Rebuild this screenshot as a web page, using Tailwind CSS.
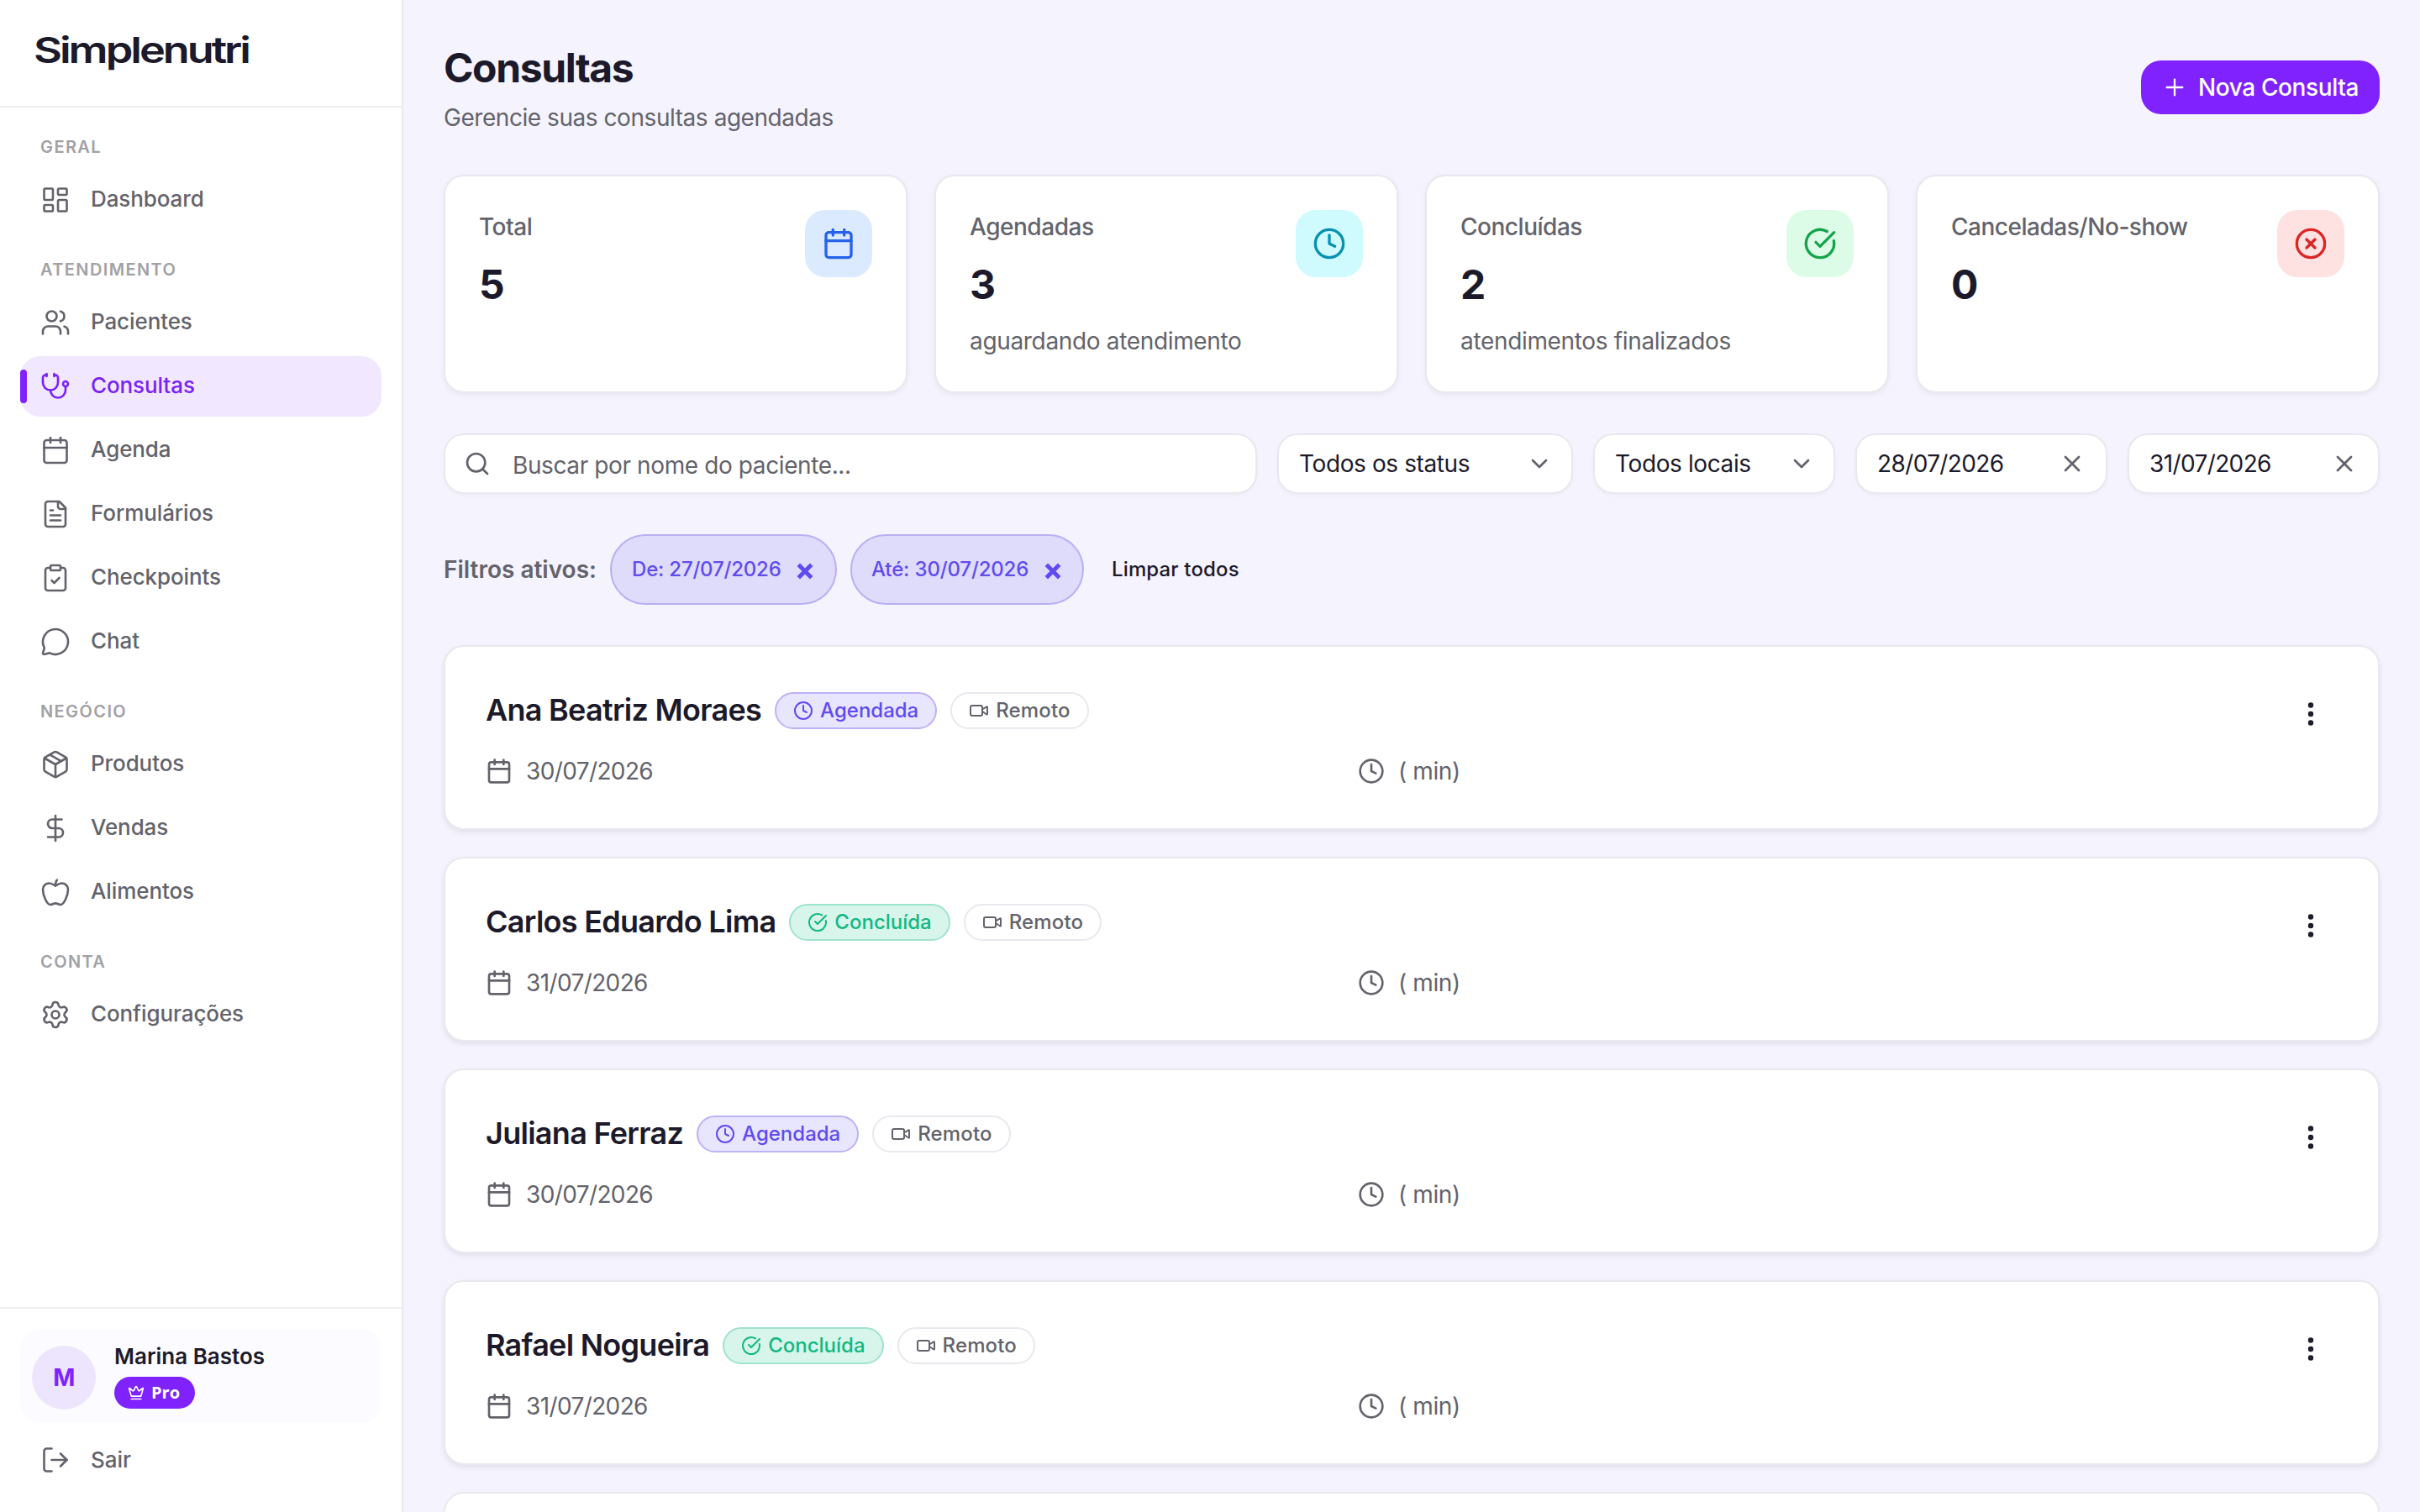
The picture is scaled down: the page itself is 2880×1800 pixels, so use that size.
<!DOCTYPE html>
<html lang="pt-BR">
<head>
    <meta charset="UTF-8">
    <meta name="viewport" content="width=device-width, initial-scale=1.0">
    <title>Consultas - Simplenutri</title>
    <script src="https://cdn.jsdelivr.net/npm/@tailwindcss/browser@4"></script>
</head>
<body class="h-[1800px] w-[2880px] overflow-hidden bg-[#f5f3fe] font-['Inter',sans-serif] text-[28px] leading-10 tracking-[-0.014em] text-[#1c1a2a]">

    <!-- icons -->
    <svg class="hidden" xmlns="http://www.w3.org/2000/svg">
        <symbol id="dashboard" viewBox="0 0 24 24"><rect width="7" height="9" x="3" y="3" rx="1"/><rect width="7" height="5" x="14" y="3" rx="1"/><rect width="7" height="9" x="14" y="12" rx="1"/><rect width="7" height="5" x="3" y="16" rx="1"/></symbol>
        <symbol id="users" viewBox="0 0 24 24"><path d="M16 21v-2a4 4 0 0 0-4-4H6a4 4 0 0 0-4 4v2"/><path d="M16 3.128a4 4 0 0 1 0 7.744"/><path d="M22 21v-2a4 4 0 0 0-3-3.87"/><circle cx="9" cy="7" r="4"/></symbol>
        <symbol id="stethoscope" viewBox="0 0 24 24"><path d="M11 2v2"/><path d="M5 2v2"/><path d="M5 3H4a2 2 0 0 0-2 2v4a6 6 0 0 0 12 0V5a2 2 0 0 0-2-2h-1"/><path d="M8 15a6 6 0 0 0 12 0v-3"/><circle cx="20" cy="10" r="2"/></symbol>
        <symbol id="calendar" viewBox="0 0 24 24"><path d="M8 2v4"/><path d="M16 2v4"/><rect width="18" height="18" x="3" y="4" rx="2"/><path d="M3 10h18"/></symbol>
        <symbol id="file" viewBox="0 0 24 24"><path d="M15 2H6a2 2 0 0 0-2 2v16a2 2 0 0 0 2 2h12a2 2 0 0 0 2-2V7Z"/><path d="M14 2v4a2 2 0 0 0 2 2h4"/><path d="M10 9H8"/><path d="M16 13H8"/><path d="M16 17H8"/></symbol>
        <symbol id="clipboard" viewBox="0 0 24 24"><rect width="8" height="4" x="8" y="2" rx="1"/><path d="M16 4h2a2 2 0 0 1 2 2v14a2 2 0 0 1-2 2H6a2 2 0 0 1-2-2V6a2 2 0 0 1 2-2h2"/><path d="m9 14 2 2 4-4"/></symbol>
        <symbol id="chat" viewBox="0 0 24 24"><path d="M2.992 16.342a2 2 0 0 1 .094 1.167l-1.065 3.29a1 1 0 0 0 1.236 1.168l3.413-.998a2 2 0 0 1 1.099.092 10 10 0 1 0-4.777-4.719"/></symbol>
        <symbol id="package" viewBox="0 0 24 24"><path d="M11 21.73a2 2 0 0 0 2 0l7-4A2 2 0 0 0 21 16V8a2 2 0 0 0-1-1.73l-7-4a2 2 0 0 0-2 0l-7 4A2 2 0 0 0 3 8v8a2 2 0 0 0 1 1.73z"/><path d="M12 22V12"/><path d="M3.29 7 12 12l8.71-5"/><path d="m7.5 4.27 9 5.15"/></symbol>
        <symbol id="dollar" viewBox="0 0 24 24"><path d="M12 2v20"/><path d="M17 5H9.5a3.5 3.5 0 0 0 0 7h5a3.5 3.5 0 0 1 0 7H6"/></symbol>
        <symbol id="apple" viewBox="0 0 24 24"><path d="M12 20.94c1.5 0 2.75 1.06 4 1.06 3 0 6-8 6-12.22A4.91 4.91 0 0 0 17 5c-2.22 0-4 1.44-5 2-1-.56-2.78-2-5-2a4.9 4.9 0 0 0-5 4.78C2 14 5 22 8 22c1.25 0 2.5-1.06 4-1.06Z"/><path d="M12 7c0-2 .3-3.6 1.2-4.6"/></symbol>
        <symbol id="settings" viewBox="0 0 24 24"><path d="M9.671 4.136a2.34 2.34 0 0 1 4.659 0 2.34 2.34 0 0 0 3.319 1.915 2.34 2.34 0 0 1 2.33 4.033 2.34 2.34 0 0 0 0 3.831 2.34 2.34 0 0 1-2.33 4.033 2.34 2.34 0 0 0-3.319 1.915 2.34 2.34 0 0 1-4.659 0 2.34 2.34 0 0 0-3.32-1.915 2.34 2.34 0 0 1-2.33-4.033 2.34 2.34 0 0 0 0-3.831A2.34 2.34 0 0 1 6.35 6.051a2.34 2.34 0 0 0 3.319-1.915"/><circle cx="12" cy="12" r="3"/></symbol>
        <symbol id="logout" viewBox="0 0 24 24"><path d="m16 17 5-5-5-5"/><path d="M21 12H9"/><path d="M9 21H5a2 2 0 0 1-2-2V5a2 2 0 0 1 2-2h4"/></symbol>
        <symbol id="crown" viewBox="0 0 24 24"><path d="M11.562 3.266a.5.5 0 0 1 .876 0L15.39 8.87a1 1 0 0 0 1.516.294L21.183 5.5a.5.5 0 0 1 .798.519l-2.834 10.246a1 1 0 0 1-.956.734H5.81a1 1 0 0 1-.957-.734L2.02 6.02a.5.5 0 0 1 .798-.519l4.276 3.664a1 1 0 0 0 1.516-.294z"/><path d="M5 21h14"/></symbol>
        <symbol id="plus" viewBox="0 0 24 24"><path d="M5 12h14"/><path d="M12 5v14"/></symbol>
        <symbol id="clock" viewBox="0 0 24 24"><circle cx="12" cy="12" r="10"/><path d="M12 6v6l4 2"/></symbol>
        <symbol id="check" viewBox="0 0 24 24"><path d="M21.801 10A10 10 0 1 1 17 3.335"/><path d="m9 11 3 3L22 4"/></symbol>
        <symbol id="cancel" viewBox="0 0 24 24"><circle cx="12" cy="12" r="10"/><path d="m15 9-6 6"/><path d="m9 9 6 6"/></symbol>
        <symbol id="search" viewBox="0 0 24 24"><path d="m21 21-4.34-4.34"/><circle cx="11" cy="11" r="8"/></symbol>
        <symbol id="chevron" viewBox="0 0 24 24"><path d="m6 9 6 6 6-6"/></symbol>
        <symbol id="x" viewBox="0 0 24 24"><path d="M18 6 6 18"/><path d="m6 6 12 12"/></symbol>
        <symbol id="video" viewBox="0 0 24 24"><path d="m16 13 5.223 3.482a.5.5 0 0 0 .777-.416V7.87a.5.5 0 0 0-.752-.432L16 10.5"/><rect x="2" y="6" width="14" height="12" rx="2"/></symbol>
        <symbol id="dots" viewBox="0 0 24 24"><circle cx="12" cy="12" r="1"/><circle cx="12" cy="5" r="1"/><circle cx="12" cy="19" r="1"/></symbol>
    </svg>

    <div class="flex h-full">
        <aside class="flex w-[480px] shrink-0 flex-col border-r-2 border-[#e9e8ee] bg-white">
            <div class="h-32 border-b-2 border-[#efeff1] pt-7 pl-10">
                <svg class="h-16 w-[262px] fill-[#1c1a2a]" viewBox="0 0 262 64"><text x="0" y="47" textLength="256" lengthAdjust="spacingAndGlyphs" class="text-[43px] font-semibold tracking-[-2.5px]">Simplenutri</text></svg>
            </div>
            <nav id="nav" class="flex-1 space-y-8 px-6 pt-8"></nav>
            <div class="border-t-2 border-[#efeff1] px-6 pt-6 pb-[26px]">
                <div class="flex h-28 items-center rounded-3xl bg-[#fcfbff] pl-3.5">
                    <div class="mt-1 flex size-[76px] items-center justify-center rounded-full bg-[#ede5fd] text-[28px] font-bold text-[#7f22fe]">M</div>
                    <div class="ml-[22px] pb-0.5">
                        <div class="text-[26px] leading-9 font-semibold tracking-normal">Marina Bastos</div>
                        <div class="mt-1.5 inline-flex h-[38px] w-24 items-center gap-2 rounded-full bg-[#7f22fe] pl-4 align-top font-['Open_Sans',sans-serif] text-xl font-bold tracking-normal text-white">
                            <svg class="size-5 shrink-0 fill-none stroke-current stroke-2" stroke-linecap="round" stroke-linejoin="round"><use href="#crown"/></svg>
                            Pro
                        </div>
                    </div>
                </div>
                <a class="mt-2 flex h-[72px] items-center gap-6 pl-6 text-[26px] font-medium tracking-normal text-[#63636b]">
                    <svg class="size-9 fill-none stroke-current stroke-[1.75]" stroke-linecap="round" stroke-linejoin="round"><use href="#logout"/></svg>
                    Sair
                </a>
            </div>
        </aside>

        <main class="flex-1 px-12 pt-12">
            <header class="mb-12 flex items-center justify-between">
                <div>
                    <h1 class="pt-px text-5xl leading-16 font-bold tracking-[-0.029em]">Consultas</h1>
                    <p class="mt-[7px] tracking-[-0.016em] text-[#63636b]">Gerencie suas consultas agendadas</p>
                </div>
                <button class="flex h-16 w-[284px] items-center gap-3 rounded-3xl bg-[#7f22fe] pl-6 font-medium whitespace-nowrap text-white">
                    <svg class="size-8 fill-none stroke-current stroke-[1.75]" stroke-linecap="round" stroke-linejoin="round"><use href="#plus"/></svg>
                    Nova Consulta
                </button>
            </header>

            <section id="stats" class="mb-12 grid grid-cols-4 gap-8"></section>

            <section class="mb-12 flex gap-6">
                <div class="flex h-[72px] flex-1 items-center gap-[26px] rounded-3xl border-2 border-[#e9e8ee] bg-white pl-[22px] text-[#63636b] shadow-[0_2px_4px_rgba(0,0,0,0.03)]">
                    <svg class="size-8 fill-none stroke-current stroke-2" stroke-linecap="round" stroke-linejoin="round"><use href="#search"/></svg>
                    <span class="pt-1">Buscar por nome do paciente...</span>
                </div>
                <div class="flex h-[72px] w-[352px] items-center justify-between rounded-3xl border-2 border-[#e9e8ee] bg-white pr-[22px] pl-6 shadow-[0_2px_4px_rgba(0,0,0,0.03)]">
                    Todos os status
                    <svg class="size-8 fill-none stroke-[#63636b] stroke-2" stroke-linecap="round" stroke-linejoin="round"><use href="#chevron"/></svg>
                </div>
                <div class="flex h-[72px] w-[288px] items-center justify-between rounded-3xl border-2 border-[#e9e8ee] bg-white pr-[22px] pl-6 shadow-[0_2px_4px_rgba(0,0,0,0.03)]">
                    Todos locais
                    <svg class="size-8 fill-none stroke-[#63636b] stroke-2" stroke-linecap="round" stroke-linejoin="round"><use href="#chevron"/></svg>
                </div>
                <div class="flex h-[72px] w-[300px] items-center justify-between rounded-3xl border-2 border-[#e9e8ee] bg-white px-6 tracking-[-0.022em] shadow-[0_2px_4px_rgba(0,0,0,0.03)]">
                    28/07/2026
                    <svg class="size-8 fill-none stroke-[#63636b] stroke-2" stroke-linecap="round" stroke-linejoin="round"><use href="#x"/></svg>
                </div>
                <div class="flex h-[72px] w-[300px] items-center justify-between rounded-3xl border-2 border-[#e9e8ee] bg-white px-6 tracking-[-0.022em] shadow-[0_2px_4px_rgba(0,0,0,0.03)]">
                    31/07/2026
                    <svg class="size-8 fill-none stroke-[#63636b] stroke-2" stroke-linecap="round" stroke-linejoin="round"><use href="#x"/></svg>
                </div>
            </section>

            <section class="mb-12 flex h-[84px] items-center whitespace-nowrap">
                <span class="w-[198px] font-semibold tracking-normal text-[#63636b]">Filtros ativos:</span>
                <span class="flex h-[84px] w-[270px] items-center justify-between rounded-full border-2 border-[#b9b0f5] bg-[#dedbfb] pr-[25px] pl-6 text-2xl font-medium tracking-[-0.008em] text-[#5f4bf0]">
                    De: 27/07/2026
                    <svg class="mt-1 size-[22px] fill-none stroke-current stroke-[4.5]" viewBox="0 0 20 20"><path d="M3 3l14 14M17 3 3 17"/></svg>
                </span>
                <span class="ml-4 flex h-[84px] w-[278px] items-center justify-between rounded-full border-2 border-[#b9b0f5] bg-[#dedbfb] pr-6 pl-[23px] text-2xl font-medium tracking-[-0.006em] text-[#5f4bf0]">
                    Até: 30/07/2026
                    <svg class="mt-1 size-[22px] fill-none stroke-current stroke-[4.5]" viewBox="0 0 20 20"><path d="M3 3l14 14M17 3 3 17"/></svg>
                </span>
                <span class="ml-[33px] text-2xl font-medium tracking-[0.006em]">Limpar todos</span>
            </section>

            <section id="list" class="space-y-8"></section>
        </main>
    </div>

    <script>
        const icon = (name, cls) => `<svg class="shrink-0 fill-none stroke-current ${cls}" stroke-linecap="round" stroke-linejoin="round"><use href="#${name}"/></svg>`;

        const groups = [
            ["GERAL", [["dashboard", "Dashboard"]]],
            ["ATENDIMENTO", [["users", "Pacientes"], ["stethoscope", "Consultas"], ["calendar", "Agenda"], ["file", "Formulários"], ["clipboard", "Checkpoints"], ["chat", "Chat"]]],
            ["NEGÓCIO", [["package", "Produtos"], ["dollar", "Vendas"], ["apple", "Alimentos"]]],
            ["CONTA", [["settings", "Configurações"]]]
        ];
        document.getElementById("nav").innerHTML = groups.map(([title, items]) => `
            <div>
                <div class="mb-3 pl-6 text-xl leading-[30px] font-semibold tracking-[0.07em] text-[#a1a1a6]">${title}</div>
                <div class="space-y-1">
                    ${items.map(([name, label]) => `
                        <a class="relative flex h-[72px] items-center gap-6 rounded-3xl pl-6 text-[26px] font-medium tracking-[-0.004em] ${label === "Consultas" ? "bg-[#f1e7ff] text-[#7a22f5]" : "text-[#63636b]"}">
                            ${label === "Consultas" ? `<span class="absolute top-4 left-0 h-10 w-2 rounded bg-[#7f22fe]"></span>` : ""}
                            ${icon(name, "size-9 stroke-[1.75]")}
                            <span class="-mt-0.5">${label}</span>
                        </a>
                    `).join("")}
                </div>
            </div>
        `).join("");

        const stats = [
            ["Total", 5, "", "calendar", "bg-[#dbeafe] text-[#2563eb]"],
            ["Agendadas", 3, "aguardando atendimento", "clock", "bg-[#cffafe] text-[#0891b2]"],
            ["Concluídas", 2, "atendimentos finalizados", "check", "bg-[#dcfce7] text-[#16a34a]"],
            ["Canceladas/No-show", 0, "", "cancel", "bg-[#fee2e2] text-[#dc2626]"]
        ];
        document.getElementById("stats").innerHTML = stats.map(([label, value, note, name, color]) => `
            <div class="flex h-[260px] justify-between rounded-3xl border-2 border-[#e9e8ee] bg-white p-10 shadow-[0_2px_6px_rgba(0,0,0,0.06)]">
                <div class="text-[#63636b]">
                    <div class="font-medium tracking-[-0.017em]">${label}</div>
                    <div class="mt-[17px] mb-[15px] text-5xl leading-16 font-bold text-[#1c1a2a]">${value}</div>
                    <div class="tracking-[-0.012em]">${note}</div>
                </div>
                <div class="flex size-20 items-center justify-center rounded-3xl ${color}">${icon(name, "size-10 stroke-2")}</div>
            </div>
        `).join("");

        const appointments = [
            ["Ana Beatriz Moraes", "Agendada", "30/07/2026"],
            ["Carlos Eduardo Lima", "Concluída", "31/07/2026"],
            ["Juliana Ferraz", "Agendada", "30/07/2026"],
            ["Rafael Nogueira", "Concluída", "31/07/2026"]
        ];
        document.getElementById("list").innerHTML = appointments.map(([name, status, date]) => `
            <div class="flex h-[220px] justify-between rounded-3xl border-2 border-[#e9e8ee] bg-white p-12 shadow-[0_3px_6px_rgba(0,0,0,0.08)]">
                <div class="flex-1">
                    <div class="mb-6 flex h-14 items-center gap-4">
                        <h3 class="-mt-0.5 text-4xl font-semibold tracking-[-0.02em]">${name}</h3>
                        <span class="flex h-11 items-center gap-2 rounded-full border-2 px-5 text-2xl font-medium tracking-normal ${status === "Agendada" ? "border-[#bcb2f8] bg-[#e8e5fe] text-[#5f4bf0]" : "border-[#9fe3cb] bg-[#d8f5eb] text-[#10b981]"}">
                            ${icon(status === "Agendada" ? "clock" : "check", "size-6 stroke-2")}${status}
                        </span>
                        <span class="flex h-11 items-center gap-2 rounded-full border-2 border-[#e9e8ee] px-5 text-2xl font-medium tracking-[0.006em] text-[#63636b]">
                            ${icon("video", "size-6 stroke-2")}Remoto
                        </span>
                    </div>
                    <div class="grid grid-cols-[1006px_1fr] gap-8 text-[#63636b]">
                        <div class="flex items-center gap-4 tracking-[-0.022em]">${icon("calendar", "size-8 stroke-2")}${date}</div>
                        <div class="flex items-center gap-4">${icon("clock", "size-8 stroke-2")}( min)</div>
                    </div>
                </div>
                <button class="flex size-16 items-center justify-center">${icon("dots", "size-9 stroke-[2.25]")}</button>
            </div>
        `).join("") + `<div class="h-6 rounded-t-3xl border-2 border-b-0 border-[#e9e8ee] bg-white"></div>`;
    </script>
</body>
</html>
